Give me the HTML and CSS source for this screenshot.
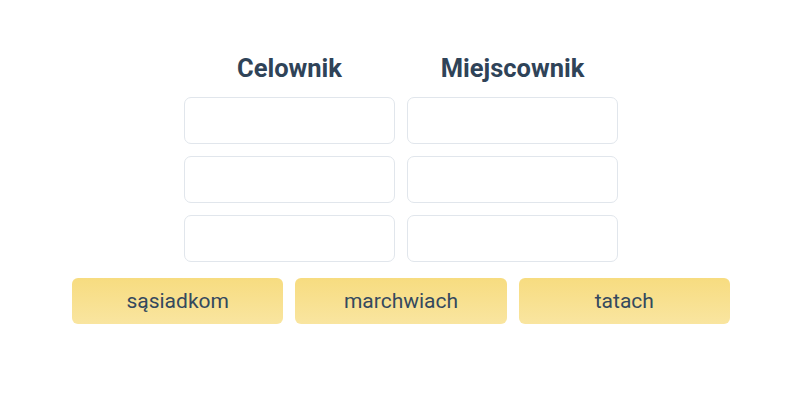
FILE: index.html
```html
<!DOCTYPE html>
<html lang="pl">

<head>
    <meta charset="UTF-8">
    <meta name="viewport" content="width=device-width, initial-scale=1.0">
    <title>Celownik i miejscownik</title>
    <link rel="stylesheet" href="styles.css">
</head>

<body>

    <div class="exercise">
        <div class="table">
            <div class="head">Celownik</div>
            <div class="head">Miejscownik</div>
            <div class="slot"></div>
            <div class="slot"></div>
            <div class="slot"></div>
            <div class="slot"></div>
            <div class="slot"></div>
            <div class="slot"></div>
        </div>

        <div class="words">
            <div class="word">sąsiadkom</div>
            <div class="word">marchwiach</div>
            <div class="word">tatach</div>
        </div>
    </div>

</body>

</html>
```

FILE: styles.css
```css
body {
    font-family: Roboto, "Noto Sans", sans-serif;
    background-color: #fff;
    margin: 0;
    color: #34495e;
}

.exercise {
    width: 658px;
    margin: 0 auto;
    padding-top: 50px;
    transform: translateX(1px);
}

.table {
    display: grid;
    grid-template-columns: 211px 211px;
    column-gap: 12px;
    row-gap: 12px;
    justify-content: center;
}

.head {
    text-align: center;
    font-size: 25.5px;
    font-weight: bold;
    color: #2f4358;
    height: 35px;
    line-height: 37px;
}

.slot {
    height: 45px;
    border: 1px solid #e1e6ec;
    border-radius: 7px;
    background-color: #fff;
}

.words {
    display: grid;
    grid-template-columns: repeat(3, 1fr);
    gap: 12px;
    margin-top: 16px;
}

.word {
    height: 46px;
    line-height: 46px;
    text-align: center;
    font-size: 21px;
    color: #34495e;
    border-radius: 6px;
    background: linear-gradient(to bottom, #f7dc80, #f9e5a0);
}
```
